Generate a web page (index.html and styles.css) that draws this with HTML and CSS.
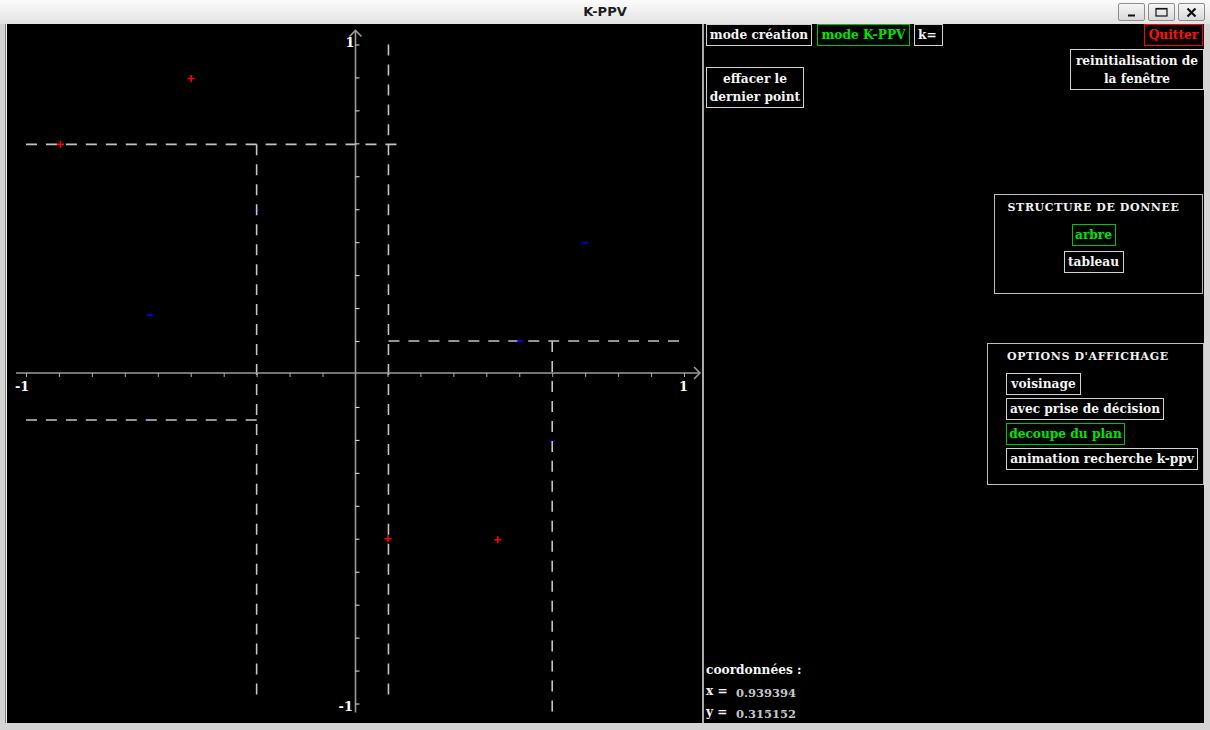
FILE: index.html
```html
<!DOCTYPE html>
<html lang="fr">
<head>
<meta charset="utf-8">
<title>K-PPV</title>
<link rel="stylesheet" href="styles.css">
</head>
<body>
<div class="window">
  <header class="titlebar">
    <span></span>
    <span class="title">K-PPV</span>
    <div class="controls">
      <span class="ctl"><svg width="9" height="9" viewBox="0 0 9 9"><rect class="glyph" x="1" y="6.5" width="7" height="2"/></svg></span>
      <span class="ctl"><svg width="13" height="10" viewBox="0 0 13 10"><rect class="glyph-line" x="1" y="1.5" width="11" height="7.5"/><rect class="glyph" x="1" y="1" width="11" height="1.5"/></svg></span>
      <span class="ctl"><svg width="11" height="11" viewBox="0 0 11 11"><path class="glyph-x" d="M1.5 1.5L9.5 9.5M9.5 1.5L1.5 9.5"/></svg></span>
    </div>
  </header>
  <main class="main">
    <div class="board">
      <svg class="plot" width="696" height="699" viewBox="7 24 696 699">
        <g class="neg dim">
          <path d="M145 420h5"/>
          <path d="M551 441h5"/>
          <path d="M255 210h5"/>
        </g>
        <g class="dash">
          <line x1="26" y1="144" x2="397" y2="144"/>
          <line x1="389" y1="44" x2="389" y2="695"/>
          <line x1="257" y1="144" x2="257" y2="695"/>
          <line x1="26" y1="420" x2="257" y2="420"/>
          <line x1="389" y1="341" x2="680" y2="341"/>
          <line x1="553" y1="341" x2="553" y2="712"/>
        </g>
        <g class="axis">
          <line x1="16" y1="373" x2="700" y2="373"/>
          <line x1="356" y1="30" x2="356" y2="713"/>
          <polyline points="695,367 701,373 695,379"/>
          <polyline points="350,36 356,30 362,36"/>
        </g>
        <path class="tick-x" d="M26.5 373v4M59.5 373v4M92.5 373v4M125.5 373v4M158.5 373v4M191.5 373v4M224.5 373v4M257.5 373v4M290.5 373v4M323.5 373v4M388.5 373v4M421.5 373v4M454.5 373v4M487.5 373v4M520.5 373v4M553.5 373v4M586.5 373v4M619.5 373v4M652.5 373v4M685.5 373v4"/>
        <path class="tick-y" d="M356 44.5h4M356 77.5h4M356 110.5h4M356 143.5h4M356 176.5h4M356 209.5h4M356 242.5h4M356 275.5h4M356 308.5h4M356 341.5h4M356 407.5h4M356 440.5h4M356 473.5h4M356 506.5h4M356 539.5h4M356 572.5h4M356 605.5h4M356 638.5h4M356 671.5h4M356 704.5h4"/>
        <text class="lbl" x="346" y="47">1</text>
        <text class="lbl" x="15" y="391">-1</text>
        <text class="lbl" x="680" y="391">1</text>
        <text class="lbl" x="339" y="711">-1</text>
        <g class="pos">
          <path d="M188 78h7M191.5 74.5v7"/>
          <path d="M57 144h7M60.5 140.5v7"/>
          <path d="M385 539h7M388.5 535.5v7"/>
          <path d="M495 540h7M498.5 536.5v7"/>
        </g>
        <g class="neg">
          <path d="M583 242.5h6"/>
          <path d="M518 341h6"/>
          <path d="M147 315h6"/>
        </g>
      </svg>
    </div>
    <div class="sep"></div>
    <section class="panel">
      <div class="top">
        <div class="top-left">
          <div class="mode-row">
            <span class="btn w-creation">mode création</span>
            <span class="btn green w-kppv">mode K-PPV</span>
            <span class="btn w-k">k=</span>
          </div>
          <span class="btn two w-effacer">effacer le<br>dernier point</span>
        </div>
        <div class="top-right">
          <span class="btn red w-quit">Quitter</span>
          <span class="btn two w-reinit">reinitialisation de<br>la fenêtre</span>
        </div>
      </div>
      <div class="group structure">
        <div class="group-title">STRUCTURE DE DONNEE</div>
        <span class="btn green w-arbre">arbre</span>
        <span class="btn w-tableau">tableau</span>
      </div>
      <div class="group options">
        <div class="group-title">OPTIONS D'AFFICHAGE</div>
        <span class="btn w-vois">voisinage</span>
        <span class="btn w-avec">avec prise de décision</span>
        <span class="btn green w-decoupe">decoupe du plan</span>
        <span class="btn w-anim">animation recherche k-ppv</span>
      </div>
      <div class="coords">
        <div class="coords-head">coordonnées :</div>
        <div class="coord-row"><span>x =</span><span class="val">0.939394</span></div>
        <div class="coord-row"><span>y =</span><span class="val">0.315152</span></div>
      </div>
    </section>
  </main>
</div>
</body>
</html>
```

FILE: styles.css
```css
* { box-sizing: border-box; }
html, body {
  margin: 0;
  padding: 0;
}
body {
  width: 1210px;
  height: 730px;
  overflow: hidden;
  background: #d5d5d5;
  font-family: "DejaVu Serif", serif;
}
.window {
  display: flex;
  flex-direction: column;
  height: 730px;
}
.titlebar {
  height: 24px;
  display: grid;
  grid-template-columns: 1fr auto 1fr;
  align-items: center;
  background: linear-gradient(#fbfbfb, #e3e3e3);
}
.title {
  font: bold 13px "DejaVu Sans", sans-serif;
  color: #1e1e1e;
  padding-bottom: 2px;
}
.controls {
  justify-self: end;
  display: flex;
  gap: 3px;
  padding-right: 5px;
}
.ctl {
  width: 27px;
  height: 18px;
  border: 1px solid #8e8e8e;
  border-radius: 2px;
  background: linear-gradient(#f6f6f6, #d9d9d9);
  display: flex;
  align-items: center;
  justify-content: center;
}
.ctl svg { display: block; }
.glyph { fill: #111; }
.glyph-line { fill: none; stroke: #111; stroke-width: 1.2; }
.glyph-x { stroke: #111; stroke-width: 2.2; fill: none; }

.main {
  display: flex;
  height: 699px;
  padding-left: 5px;
}
.board {
  border-left: 1px solid #7e7e7e;
}
.plot {
  display: block;
  background: #000;
  border-left: 1px solid #f2f2f2;
}
.dash line {
  stroke: #c4c4c4;
  stroke-width: 1.6;
  stroke-dasharray: 11 9;
  fill: none;
}
.axis line, .axis polyline {
  stroke: #9a9a9a;
  stroke-width: 1.6;
  fill: none;
}
.tick-x { stroke: #b0b0b0; stroke-width: 1; fill: none; }
.tick-y { stroke: #e8e8e8; stroke-width: 1; fill: none; }
.lbl {
  fill: #fff;
  font: bold 13px "DejaVu Serif", serif;
}
.pos path { stroke: #ff0000; stroke-width: 1.6; fill: none; }
.neg path { stroke: #0000d8; stroke-width: 2; fill: none; }
.neg.dim path { stroke: #0000a0; stroke-width: 1.5; }

.sep {
  width: 2px;
  background: #a9a9a9;
}
.panel {
  width: 500px;
  background: #000;
  display: flex;
  flex-direction: column;
  padding-left: 2px;
  color: #f2f2f2;
  font: bold 12.2px "DejaVu Serif", serif;
}
.top {
  display: flex;
  justify-content: space-between;
  align-items: flex-start;
}
.top-left {
  display: flex;
  flex-direction: column;
  align-items: flex-start;
}
.mode-row {
  display: flex;
  gap: 5px;
}
.mode-row .w-k { margin-left: -1px; }
.top-right {
  display: flex;
  flex-direction: column;
  align-items: flex-end;
}
.btn {
  display: flex;
  align-items: center;
  justify-content: center;
  height: 22px;
  border: 1px solid #d2d2d2;
  color: #f4f4f4;
  white-space: nowrap;
  line-height: 18px;
}
.btn.two {
  height: 41px;
  text-align: center;
}
.btn.green { border-color: #00c400; color: #00e400; }
.btn.red { border-color: #ff0000; color: #ff1010; }

.w-creation { width: 106px; }
.w-kppv { width: 93px; }
.w-k { width: 29px; justify-content: flex-start; padding-left: 3px; }
.w-effacer { width: 98px; margin-top: 21px; }
.w-quit { width: 59px; margin-right: 1px; }
.w-reinit { width: 134px; height: 42px; margin-top: 3px; }
.w-arbre { width: 44px; margin-top: 8px; }
.w-tableau { width: 60px; margin-top: 5px; }
.w-vois { width: 75px; }
.w-avec { width: 158px; }
.w-decoupe { width: 119px; }
.w-anim { width: 192px; }

.group {
  border: 1px solid #bdbdbd;
  align-self: flex-end;
  display: flex;
  flex-direction: column;
}
.group-title {
  font: bold 11px "DejaVu Serif", serif;
  letter-spacing: 0.6px;
  line-height: 16px;
  color: #f0f0f0;
  white-space: nowrap;
}
.structure {
  width: 209px;
  height: 100px;
  margin-top: 86px;
  margin-right: 1px;
  align-items: center;
  padding: 5px 10px 0 0;
}
.options {
  width: 217px;
  height: 142px;
  margin-top: 49px;
  padding: 5px 0 0 18px;
  align-items: flex-start;
  gap: 3px;
}
.options .group-title { margin-bottom: 5px; margin-left: 1px; }
.coords {
  margin-top: auto;
  line-height: 21px;
  color: #f4f4f4;
}
.coord-row {
  display: grid;
  grid-template-columns: 30px auto;
}
.val {
  color: #c6c6c6;
  font-size: 11.5px;
  position: relative;
  top: 2px;
}
```
